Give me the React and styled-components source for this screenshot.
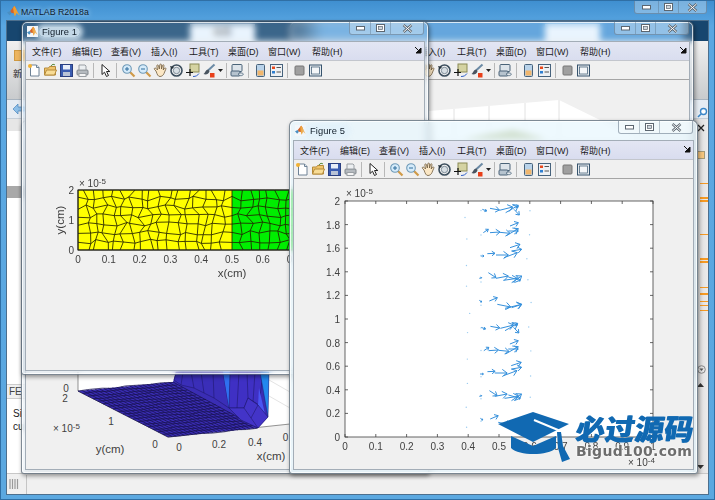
import React from 'react'
import styled, { createGlobalStyle } from 'styled-components'

const GlobalStyle = createGlobalStyle`
  html, body {
    margin: 0;
    padding: 0;
    background: #fff;
  }
  body {
    font-family: "Liberation Sans", "Noto Sans CJK SC", sans-serif;
  }
`

const Desktop = styled.div`
  position: relative;
  width: 715px;
  height: 500px;
  overflow: hidden;
  display: flex;
  flex-direction: column;
  background: linear-gradient(180deg, #3f8fd0 0%, #5aa7e2 5%, #5ba8e0 100%);
  border: 1px solid #2f6fa5;
  box-sizing: border-box;
`

const MainTitle = styled.div`
  height: 19px;
  flex: none;
  display: flex;
  align-items: center;
  gap: 1px;
  padding: 2px 0 0 6px;
  box-sizing: border-box;
  font-size: 8.8px;
  color: #10202e;
  text-shadow: 0 0 5px #cfe8fa;
`

const MainClient = styled.div`
  flex: 1;
  margin: 0 5px 4px 5px;
  display: flex;
  flex-direction: column;
  background: #f0f0f0;
  border: 1px solid #4d6f8d;
  min-height: 0;
`

const TabStrip = styled.div`
  height: 20px;
  flex: none;
  display: flex;
  align-items: stretch;
  background: linear-gradient(90deg, #17466f 0, #17466f 42%, #4b97d6 45%, #4b97d6 96%, #17466f 97%);
  padding-left: 183px;
`

const Tab = styled.div`
  width: ${p => p.$w}px;
  margin-top: 3px;
  background: ${p => p.$on ? '#f1f8ff' : 'transparent'};
  color: #555;
  font-size: 9px;
  text-align: center;
  line-height: 17px;
`

const ToolStrip = styled.div`
  height: 59px;
  flex: none;
  box-sizing: border-box;
  background: linear-gradient(180deg, #f0f0f0, #c9cbcd);
  border-bottom: 1px solid #a9b4bf;
  padding: 9px 0 0 6px;
  font-size: 9px;
  color: #222;
`

const StripIcon = styled.div`
  width: 10px;
  height: 9px;
  margin: 0 0 6px 1px;
  background: #edb55e;
  border: 1px solid #d09a42;
`

const AddressBar = styled.div`
  height: 19px;
  flex: none;
  box-sizing: border-box;
  background: #e6ecf3;
  border-bottom: 1px solid #c5ced8;
  padding-left: 6px;
  display: flex;
  align-items: center;
`

const Work = styled.div`
  flex: 1;
  display: flex;
  min-height: 0;
`

const LeftPane = styled.div`
  width: 18px;
  flex: none;
  background: #fff;
  display: flex;
  flex-direction: column;
  box-sizing: border-box;
  font-size: 10px;
  color: #222;
`

const PaneStripe = styled.div`
  height: ${p => p.$h}px;
  flex: none;
  background: ${p => p.$c || '#fff'};
`

const PaneLine = styled.div`
  padding-left: 6px;
  line-height: 13px;
  overflow: hidden;
  white-space: nowrap;
`

const PaneHead = styled(PaneLine)`
  background: #f0f0f0;
  border-top: 1px solid #ccc;
  border-bottom: 1px solid #ccc;
  margin-bottom: 8px;
  padding-left: 2px;
  color: #444;
`

const WorkFill = styled.div`
  flex: 1;
  background: #efefef;
`

const RightStrip = styled.div`
  width: 14px;
  flex: none;
  position: relative;
  background: linear-gradient(90deg, #d4d4d4, #ececec);
  border-left: 1px solid #9a9a9a;
`

const Mark = styled.div`
  position: absolute;
  right: 0;
  top: ${p => p.$y}px;
  width: ${p => p.$w || 8}px;
  height: ${p => p.$h || 1}px;
  background: #f59a23;
`

const StripGlyph = styled.div`
  position: absolute;
  left: 3px;
  top: ${p => p.$y}px;
  display: flex;
`

const StatusBar = styled.div`
  height: 20px;
  flex: none;
  background: #f0f0f0;
  border-top: 1px solid #c8c8c8;
  display: flex;
  align-items: center;
`

const Grip = styled.div`
  width: 20px;
  height: 19px;
  flex: none;
  box-sizing: border-box;
  padding: 4px 0 0 2px;
  border-right: 1px solid #c5c5c5;
  display: flex;
`

const Frame = styled.div`
  position: absolute;
  left: ${p => p.$x}px;
  top: ${p => p.$y}px;
  width: ${p => p.$w}px;
  height: ${p => p.$h}px;
  box-sizing: border-box;
  display: flex;
  flex-direction: column;
  padding: 0 3px 3px 3px;
  border: 1px solid rgba(50, 65, 80, 0.6);
  border-radius: 6px 6px 3px 3px;
  background: ${p => p.$active ? 'rgba(232, 246, 254, 0.72)' : 'rgba(205, 232, 250, 0.2)'};
  backdrop-filter: blur(3px);
  box-shadow: 1px 2px 4px rgba(0, 0, 0, 0.4), inset 0 0 0 1px rgba(255, 255, 255, 0.75);
`

const TitleRow = styled.div`
  height: 19px;
  flex: none;
  display: flex;
  align-items: center;
  gap: 4px;
  padding-left: 2px;
  font-size: 9.3px;
  letter-spacing: 0.1px;
  color: #101c28;
`

const TitleIcon = styled.span`
  width: 11px;
  height: 11px;
  display: flex;
  background: #f4f7fa;
`

const TitleText = styled.span`
  padding: 0 3px;
  margin-left: -3px;
  border-radius: 5px;
  background: rgba(225, 240, 250, 0.82);
  box-shadow: 0 0 5px 3px rgba(225, 240, 250, 0.82);
`

const Caption = styled.div`
  position: absolute;
  top: 0;
  right: ${p => p.$right || 4}px;
  height: 12px;
  display: flex;
  border: 1px solid rgba(80, 100, 120, 0.5);
  border-top: none;
  border-radius: 0 0 3px 3px;
  background: rgba(255, 255, 255, 0.3);
`

const CapBtn = styled.div`
  width: ${p => p.$w}px;
  display: flex;
  align-items: center;
  justify-content: center;
  border-left: ${p => p.$first ? 'none' : '1px solid rgba(80, 100, 120, 0.35)'};
`

const Client = styled.div`
  flex: 1;
  display: flex;
  flex-direction: column;
  min-height: 0;
  background: #f0f0f0;
  border: 1px solid #a3adb7;
`

const MenuBar = styled.div`
  height: 18px;
  flex: none;
  position: relative;
  display: flex;
  align-items: center;
  padding-left: 6px;
  background: linear-gradient(180deg, #e3e6f3, #d9ddef);
  border-bottom: 1px solid #c3c6cd;
  font-size: 9px;
  color: #1a1a1a;
`

const MenuItem = styled.span`
  width: ${p => p.$w}px;
  flex: none;
  white-space: nowrap;
`

const DockArrow = styled.span`
  position: absolute;
  right: 2px;
  top: 5px;
  display: flex;
`

const ToolBar = styled.div`
  height: 18px;
  flex: none;
  display: flex;
  align-items: center;
  background: #f0f0f0;
  border-bottom: 1px solid #a5a5a5;
`

const Slot = styled.div`
  width: ${p => p.$w || 16}px;
  height: 16px;
  flex: none;
  display: flex;
  align-items: center;
  justify-content: center;
`

const Sep = styled.div`
  width: 1px;
  height: 15px;
  flex: none;
  margin: 0 ${p => p.$m || 3}px;
  background: #b8b8b8;
`

const Plot = styled.div`
  flex: 1;
  position: relative;
  min-height: 0;
  overflow: hidden;
`

const Logo = styled.div`
  position: absolute;
  left: 496px;
  top: 409px;
  width: 205px;
  height: 58px;
  display: flex;
`

const LogoWords = styled.div`
  margin-left: 3px;
  display: flex;
  flex-direction: column;
`

const LogoCn = styled.div`
  font-family: "Noto Sans CJK SC", sans-serif;
  font-weight: 900;
  font-size: 29px;
  line-height: 34px;
  letter-spacing: 0.5px;
  color: #1169b2;
  transform: skewX(-8deg);
  text-shadow: 1px 0 0 #1169b2;
  white-space: nowrap;
`

const LogoEn = styled.div`
  font-family: "DejaVu Sans", sans-serif;
  font-weight: 700;
  font-size: 14px;
  line-height: 15px;
  letter-spacing: 0.3px;
  color: #6d6d6d;
  white-space: nowrap;
  text-shadow: 0 0 2px #fff, 0 0 2px #fff;
`

const MatlabLogo = ({ size = 11 }) => (
  <svg width={size} height={size} viewBox="0 0 14 14">
    <path d="M0 8l3.500-1.500L5 8.500 2.800 11z" fill="#4a8fc2" />
    <path d="M3.500 6.500 7.800 1c1 0 2.200 3.500 3.200 6L8 9 5 8.500z" fill="#d4622a" />
    <path d="M7.800 1c1.200 0 3 6 5.800 10-1.500-.7-2.500-1.800-3.200-2.400L8.500 12.500C7.500 10 7 7 6.600 3z" fill="#f0a030" />
  </svg>
)

const capStroke = '#5c6670'

const MinIcon = () => (
  <svg width="9" height="5" viewBox="0 0 9 5"><rect x=".5" y=".5" width="8" height="3.500" fill="#fff" stroke={capStroke} /></svg>
)
const MaxIcon = () => (
  <svg width="9" height="8" viewBox="0 0 9 8"><rect x=".5" y=".5" width="8" height="7" fill="#fff" stroke={capStroke} /><rect x="2.500" y="2.500" width="4" height="3" fill="#cfd6dc" stroke={capStroke} strokeWidth=".7" /></svg>
)
const CloseIcon = () => (
  <svg width="11" height="9" viewBox="0 0 11 9"><path d="M1.500 1l8 7M9.500 1l-8 7" stroke={capStroke} strokeWidth="2.400" /><path d="M1.500 1l8 7M9.500 1l-8 7" stroke="#fff" strokeWidth="1" /></svg>
)

const Ic = ({ children }) => (
  <Slot>
    <svg width="15" height="15" viewBox="0 0 15 15">{children}</svg>
  </Slot>
)

const Lens = ({ sign }) => (
  <>
    <path d="M9 9l4.500 4.500" stroke="#d09a48" strokeWidth="2.200" />
    <circle cx="6" cy="6" r="4.300" fill="#d5ebfa" stroke="#6f9ab8" strokeWidth="1.100" />
    <path d={sign === '+' ? 'M4 6h4M6 4v4' : 'M4 6h4'} stroke="#2f6c9c" strokeWidth="1" />
  </>
)

const FigToolbar = () => (
  <ToolBar>
    <Ic>
      <path d="M3.500 2h6l2.500 2.500V13h-8.500z" fill="#fff" stroke="#6e8296" />
      <path d="M9.500 2v2.500H12" fill="#dfe6ee" stroke="#6e8296" />
      <circle cx="3" cy="3" r="2" fill="#f2b233" />
    </Ic>
    <Ic>
      <path d="M1.500 5h4l1-1.500h6V12h-11z" fill="#f0c46a" stroke="#b58a3a" />
      <path d="M1.500 12l2-5h10l-2 5z" fill="#f8dc95" stroke="#b58a3a" />
      <path d="M8 3c1-2 3-2 4-1" fill="none" stroke="#5a8a3a" />
    </Ic>
    <Ic>
      <rect x="1.500" y="1.500" width="12" height="12" fill="#3a5cb0" stroke="#2a3f80" />
      <rect x="4" y="2" width="7" height="4.500" fill="#e8eef8" />
      <rect x="4" y="9" width="7" height="4" fill="#b9c3d6" />
    </Ic>
    <Ic>
      <rect x="2" y="7" width="11" height="5" rx="1" fill="#b5babf" stroke="#80868b" />
      <path d="M4 7V2h6l1 1v4z" fill="#eceff1" stroke="#9a9fa4" />
      <rect x="4" y="10.500" width="7" height="3" fill="#f4f4f4" stroke="#9a9fa4" />
    </Ic>
    <Sep $m={3} />
    <Ic>
      <path d="M4 1.500v10l2.500-2.300L8.500 13.500l2-1-2-4h3.300z" fill="#fff" stroke="#222" />
    </Ic>
    <Sep $m={3} />
    <Ic><Lens sign="+" /></Ic>
    <Ic><Lens sign="-" /></Ic>
    <Ic>
      <path d="M3 8L1.500 6.500c-.8-1 .5-2 1.400-1.200L4.500 7 3.800 2.800c0-1.200 1.500-1.200 1.700 0L6.300 6 6.800 1.800c.2-1 1.600-1 1.600 0L8.500 6l1-3.600c.3-1 1.700-.7 1.500.4L10.200 7l1.300-1.800c.7-.8 1.800 0 1.300 1L11 10.500c-.8 2-2.500 3-4 3-2 0-2.800-2-4-5.500z" fill="#fbe7c5" stroke="#6e5a3c" strokeWidth=".8" />
    </Ic>
    <Ic>
      <circle cx="7.500" cy="7.500" r="5.500" fill="none" stroke="#3d4f5e" strokeWidth="1.600" />
      <circle cx="7.500" cy="7.500" r="3.200" fill="#d8dfe4" stroke="#6a7a86" strokeWidth=".8" />
      <path d="M1 3l1.500 3.500L5 4z" fill="#25313a" />
    </Ic>
    <Ic>
      <rect x="5" y="1" width="9" height="8" fill="#d5d3a2" stroke="#8a8a55" />
      <path d="M1 9.500h7M5 6v7" stroke="#111" strokeWidth="1.200" />
      <path d="M8 13.500c3 0 4.500-1 6-3" fill="none" stroke="#3060c8" />
    </Ic>
    <Ic>
      <path d="M13.500 1.500L7 7.500" stroke="#6b8aa5" strokeWidth="2" />
      <path d="M7.500 6.500c-3 0-3 3-5 4.500 2 1 5 .5 6-2.500z" fill="#4a5560" />
      <rect x="9" y="10" width="4.500" height="4.500" fill="#e8401a" />
    </Ic>
    <Slot $w={8}>
      <svg width="5" height="3" viewBox="0 0 5 3"><path d="M0 0h5L2.500 3z" fill="#222" /></svg>
    </Slot>
    <Sep $m={2} />
    <Ic>
      <rect x="2" y="1.500" width="10" height="7" rx="1" fill="#dde4ea" stroke="#4a6378" />
      <rect x="1" y="8" width="9" height="5" rx="1" fill="#b6c3ce" stroke="#4a6378" />
      <path d="M8 11c2-1.500 4-1.500 5.500 0-1 2-3.500 2.500-5.500 0z" fill="#e5eaee" stroke="#4a6378" strokeWidth=".8" />
    </Ic>
    <Sep $m={3} />
    <Ic>
      <rect x="3.500" y="1.500" width="8" height="12" rx="1" fill="#b9d3ea" stroke="#46627c" />
      <rect x="4.500" y="7.500" width="6" height="5" fill="#f1b66c" />
    </Ic>
    <Ic>
      <rect x="1.500" y="1.500" width="12" height="12" fill="#eef1f4" stroke="#46627c" />
      <rect x="3" y="3.500" width="3" height="2.500" fill="#e8491d" />
      <rect x="3" y="8" width="3" height="2.500" fill="#2f7fd0" />
      <path d="M7.500 4.500h4.500M7.500 9h4.500" stroke="#555" />
    </Ic>
    <Sep $m={3} />
    <Ic>
      <rect x="3" y="3" width="9" height="9" rx="1" fill="#a0a0a0" stroke="#777" />
    </Ic>
    <Ic>
      <rect x="1.500" y="2" width="12" height="11" fill="#e6ebef" stroke="#36536d" />
      <rect x="3.500" y="4" width="8" height="7" fill="#f4f6f8" stroke="#36536d" strokeWidth=".7" />
    </Ic>
  </ToolBar>
)

const menus = [
  ['文件(F)', 40], ['编辑(E)', 39], ['查看(V)', 40], ['插入(I)', 38],
  ['工具(T)', 39], ['桌面(D)', 40], ['窗口(W)', 44], ['帮助(H)', 40],
]

const FigWindow = ({ title, x, y, w, h, active, children }) => (
  <Frame $x={x} $y={y} $w={w} $h={h} $active={active}>
    <TitleRow>
      {title && <TitleIcon><MatlabLogo /></TitleIcon>}
      {title && <TitleText>{title}</TitleText>}
    </TitleRow>
    <Caption>
      <CapBtn $w={20} $first><MinIcon /></CapBtn>
      <CapBtn $w={19}><MaxIcon /></CapBtn>
      <CapBtn $w={32}><CloseIcon /></CapBtn>
    </Caption>
    <Client>
      <MenuBar>
        {menus.map(([label, width]) => (
          <MenuItem key={label} $w={width}>{label}</MenuItem>
        ))}
        <DockArrow>
          <svg width="7" height="7" viewBox="0 0 7 7"><path d="M0 0l5 5M6 1v5H1z" stroke="#111" fill="#111" /></svg>
        </DockArrow>
      </MenuBar>
      <FigToolbar />
      <Plot>{children}</Plot>
    </Client>
  </Frame>
)

const rng = seed => {
  let s = seed
  return () => {
    s = (s * 16807) % 2147483647
    return (s - 1) / 2147483646
  }
}

const axisColor = '#404040'
const labelFont = { fontFamily: '"Liberation Sans", sans-serif', fill: '#404040' }

// quad mesh with jittered nodes, coordinates in the plot's own pixels
const Mesh = ({ x0, y0, w, h, nx, ny, split }) => {
  const r = rng(77)
  const pts = []
  for (let j = 0; j <= ny; j++) {
    const row = []
    for (let i = 0; i <= nx; i++) {
      const edgeX = i === 0 || i === nx || Math.abs(x0 + (i * w) / nx - split) < 0.1
      const edgeY = j === 0 || j === ny
      row.push([
        x0 + (i * w) / nx + (edgeX ? 0 : (r() - 0.5) * 7.5),
        y0 + (j * h) / ny + (edgeY ? 0 : (r() - 0.5) * 4.6),
      ])
    }
    pts.push(row)
  }
  let d = ''
  pts.forEach(row => {
    d += 'M' + row.map(p => p[0].toFixed(1) + ' ' + p[1].toFixed(1)).join('L')
  })
  for (let i = 0; i <= nx; i++) {
    d += 'M' + pts.map(row => row[i][0].toFixed(1) + ' ' + row[i][1].toFixed(1)).join('L')
  }
  return <path d={d} fill="none" stroke="#222200" strokeWidth=".85" />
}

const Exponent = ({ x, y, power }) => (
  <text x={x} y={y} fontSize="10" style={labelFont}>× 10<tspan dy="-3" fontSize="8">{power}</tspan></text>
)

// origin of the plot area inside Figure 1: x 25, y 79 on the page
const Figure1Plot = () => {
  const ox = 25
  const oy = 79
  const X = v => 77 - ox + v * 308
  const top = 189 - oy
  const bottom = 249 - oy
  return (
    <svg width="398" height="290" viewBox="0 0 398 290">
      <rect x={X(0)} y={top} width={154} height={60} fill="#ffff00" />
      <rect x={X(0.5)} y={top} width={154} height={60} fill="#00ee00" />
      <Mesh x0={X(0)} y0={top} w={308} h={60} nx={34} ny={7} split={X(0.5)} />
      <rect x={X(0)} y={top} width={308} height={60} fill="none" stroke="#222" />
      {[0, 0.1, 0.2, 0.3, 0.4, 0.5, 0.6, 0.7, 0.8, 0.9, 1].map(v => (
        <text key={v} x={X(v)} y={bottom + 13} fontSize="10" textAnchor="middle" style={labelFont}>{v}</text>
      ))}
      {[[0, bottom], [1, top + 30], [2, top]].map(([v, y]) => (
        <text key={v} x={X(0) - 4} y={y + 4} fontSize="10" textAnchor="end" style={labelFont}>{v}</text>
      ))}
      <Exponent x={X(0) + 1} y={top - 3} power="-5" />
      <text x={X(0.5)} y={bottom + 27} fontSize="11.500" textAnchor="middle" style={labelFont}>x(cm)</text>
      <text transform={`translate(${X(0) - 14},${top + 30}) rotate(-90)`} fontSize="11.500" textAnchor="middle" style={labelFont}>y(cm)</text>
    </svg>
  )
}

// one set of quiver arrows per row, as page pixels relative to the first row's corner
const arrowSets = [
  [[127, 55, 140, 60], [150, 52, 178, 57], [178, 58, 218, 48], [197, 65, 235, 43], [218, 42, 235, 48], [222, 55, 238, 72]],
  [[130, 125, 145, 115], [150, 125, 180, 123], [180, 124, 210, 127], [197, 135, 235, 113], [210, 105, 235, 95], [205, 120, 235, 120]],
  [[122, 195, 132, 195], [142, 188, 165, 187], [168, 192, 205, 192], [192, 200, 232, 185], [210, 170, 240, 160], [215, 180, 245, 175]],
  [[145, 245, 168, 260], [168, 262, 205, 255], [190, 268, 232, 262], [215, 275, 245, 255], [205, 258, 240, 268], [118, 262, 125, 260]],
  [[148, 330, 172, 320], [172, 340, 212, 348], [195, 352, 245, 340], [215, 350, 245, 340], [118, 328, 125, 333]],
]

const Arrow = ({ x1, y1, x2, y2 }) => {
  const dx = x2 - x1
  const dy = y2 - y1
  const len = Math.hypot(dx, dy) || 1
  const ux = dx / len
  const uy = dy / len
  const size = Math.min(6, len * 0.5)
  const a = [x2 - size * (ux * 0.8 - uy * 0.6), y2 - size * (uy * 0.8 + ux * 0.6)]
  const b = [x2 - size * (ux * 0.8 + uy * 0.6), y2 - size * (uy * 0.8 - ux * 0.6)]
  return (
    <path
      d={`M${x1} ${y1}L${x2} ${y2}M${a[0].toFixed(1)} ${a[1].toFixed(1)}L${x2} ${y2}L${b[0].toFixed(1)} ${b[1].toFixed(1)}`}
      fill="none"
      stroke="#3590dc"
      strokeWidth="1"
    />
  )
}

// origin of the plot area inside Figure 5: x 294, y 178 on the page
const Figure5Plot = () => {
  const ox = 294
  const oy = 178
  const X = v => 345 - ox + v * 308
  const Y = v => 436 - oy - v * 118
  const r = rng(431)
  const arrows = []
  const dots = []
  for (let n = 0; n < 10; n++) {
    const set = arrowSets[n % 5]
    const shift = n < 5 ? 0 : 118
    set.forEach(([a, b, c, d]) => {
      const jx = n < 5 ? 0 : r() * 3 - 1.5
      arrows.push({
        x1: 440 + a / 3 - ox + jx,
        y1: 190 + b / 3 + shift - oy,
        x2: 440 + c / 3 - ox + jx,
        y2: 190 + d / 3 + shift - oy,
      })
    })
    const y = 207 + n * 23.600 - oy
    dots.push([465 - ox + r() * 5, y + 6 + r() * 5], [526 - ox + r() * 6, y + r() * 4], [481 - ox, y + r() * 4])
  }
  return (
    <svg width="398" height="291" viewBox="0 0 398 291">
      <rect x={X(0)} y={Y(2)} width={308} height={236} fill="#fff" stroke="#404040" strokeWidth=".8" />
      {[0, 0.1, 0.2, 0.3, 0.4, 0.5, 0.6, 0.7, 0.8, 0.9, 1].map(v => (
        <g key={v}>
          <path d={`M${X(v)} ${Y(0)}v-3M${X(v)} ${Y(2)}v3`} stroke="#404040" strokeWidth=".8" />
          <text x={X(v)} y={Y(0) + 13} fontSize="10" textAnchor="middle" style={labelFont}>{v}</text>
        </g>
      ))}
      {[0, 0.2, 0.4, 0.6, 0.8, 1, 1.2, 1.4, 1.6, 1.8, 2].map(v => (
        <g key={v}>
          <path d={`M${X(0)} ${Y(v)}h3M${X(1)} ${Y(v)}h-3`} stroke={axisColor} strokeWidth=".8" />
          <text x={X(0) - 5} y={Y(v) + 4} fontSize="10" textAnchor="end" style={labelFont}>{v}</text>
        </g>
      ))}
      <Exponent x={X(0) + 1} y={Y(2) - 4} power="-5" />
      <Exponent x={X(1) - 25} y={Y(0) + 29} power="-4" />
      {arrows.map((a, i) => <Arrow key={i} {...a} />)}
      {dots.map((d, i) => <circle key={i} cx={d[0]} cy={d[1]} r=".7" fill="#9cccf0" />)}
    </svg>
  )
}

// plot area of the top right window: x 293, y 80 on the page
const SurfaceTopPlot = () => {
  const P = (x, y) => `${x - 293},${y - 80}`
  return (
    <svg width="398" height="290" viewBox="0 0 398 290">
      <polygon points={`${P(428, 111)} ${P(558, 100)} ${P(640, 140)} ${P(428, 140)}`} fill="#fff" />
      <path d={`M${P(453, 109)}L${P(453, 140)}M${P(488, 106)}L${P(488, 140)}M${P(524, 103)}L${P(524, 140)}M${P(558, 100)}L${P(558, 140)}`} stroke="#e2e2e2" fill="none" />
      <polygon points={`${P(462, 139)} ${P(512, 130)} ${P(545, 139)}`} fill="#98a65a" />
    </svg>
  )
}

// plot area of the bottom left window: x 25, y 179 on the page
const SurfaceBottomPlot = () => {
  const ox = 25
  const oy = 179
  const p = (x, y) => [x - ox, y - oy]
  const P = (x, y) => p(x, y).join(',')
  const poly = pts => pts.map(([x, y]) => P(x, y)).join(' ')
  const r = rng(9)
  const A = [77, 391]
  const B = [172, 382]
  const D = [167, 437]
  const E = [257, 428]
  const lerp = (a, b, t) => [a[0] + (b[0] - a[0]) * t, a[1] + (b[1] - a[1]) * t]
  let floor = ''
  for (let i = 0; i <= 18; i++) {
    const a = lerp(A, D, i / 18)
    const b = lerp(B, E, i / 18)
    floor += `M${P(a[0], a[1])}`
    for (let k = 1; k <= 8; k++) {
      const q = lerp(a, b, k / 8)
      floor += `L${P(q[0] + (r() - 0.5) * 1.500, q[1] + (r() - 0.5) * 1.500)}`
    }
  }
  for (let i = 0; i <= 22; i++) {
    const a = lerp(A, B, i / 22)
    const b = lerp(D, E, i / 22)
    floor += `M${P(a[0], a[1])}L${P(b[0], b[1])}`
  }
  const edge = '#1a1560'
  return (
    <svg width="398" height="290" viewBox="0 0 398 290">
      <polygon points={poly([[77, 372], [289, 372], [289, 424], [167, 437], [77, 391]])} fill="#fff" />
      <path d={`M${P(77, 372)}L${P(77, 391)}L${P(167, 437)}L${P(289, 424)}`} fill="none" stroke="#666" strokeWidth=".7" />
      <path d={`M${P(268, 380)}L${P(289, 392)}M${P(268, 396)}L${P(289, 408)}`} fill="none" stroke="#e4e4e4" />
      <polygon points={poly([A, B, [175, 372], [268, 372], [267, 417], E, D])} fill="#3a2db4" />
      <path d={floor} fill="none" stroke="#17124f" strokeWidth=".75" />
      <polygon points={poly([[175, 372], [222, 372], [228, 408], [213, 398], [193, 388], [180, 385], [173, 380]])} fill="#3a2eb8" stroke={edge} strokeWidth=".5" />
      <path d={`M${P(182, 372)}L${P(180, 385)}M${P(190, 372)}L${P(193, 388)}M${P(200, 372)}L${P(203, 393)}M${P(212, 372)}L${P(213, 398)}`} stroke={edge} strokeWidth=".5" fill="none" />
      <polygon points={poly([[222, 372], [230, 372], [231, 396], [228, 408]])} fill="#2f70f0" />
      <polygon points={poly([[229, 372], [262, 372], [258, 405], [247, 398], [243, 408], [228, 408]])} fill="#3f30c4" stroke={edge} strokeWidth=".5" />
      <path d={`M${P(238, 372)}L${P(236, 408)}M${P(246, 372)}L${P(247, 398)}M${P(254, 372)}L${P(252, 402)}`} stroke={edge} strokeWidth=".5" fill="none" />
      <polygon points={poly([[259, 372], [268, 372], [267, 417]])} fill="#2288ee" stroke={edge} strokeWidth=".4" />
      <polygon points={poly([[258, 388], [264, 414], [257, 405]])} fill="#4a55f2" />
      <polygon points={poly([[228, 408], [243, 408], [247, 398], [257, 405], [267, 417], [257, 428], [240, 420]])} fill="#4334c8" stroke={edge} strokeWidth=".5" />
      <path d={`M${P(243, 408)}L${P(257, 428)}M${P(257, 405)}L${P(250, 418)}`} stroke={edge} strokeWidth=".5" fill="none" />
      {[['0', 65, 392], ['2', 64, 402], ['1', 110, 425], ['0', 154, 448], ['0', 178, 451], ['0.2', 218, 448], ['0.4', 254, 446], ['0.', 286, 441]].map(([t, x, y]) => (
        <text key={t + x} x={x - ox} y={y - oy} fontSize="10" textAnchor="middle" style={labelFont}>{t}</text>
      ))}
      <Exponent x={52 - ox} y={432 - oy} power="-5" />
      <text x={109 - ox} y={453 - oy} fontSize="11.500" textAnchor="middle" style={labelFont}>y(cm)</text>
      <text x={270 - ox} y={460 - oy} fontSize="11.500" textAnchor="middle" style={labelFont}>x(cm)</text>
    </svg>
  )
}

const App = () => (
  <>
    <GlobalStyle />
    <Desktop>
      <MainTitle>
        <MatlabLogo size={13} />
        <span>MATLAB R2018a</span>
      </MainTitle>
      <Caption $right={7}>
        <CapBtn $w={23} $first><MinIcon /></CapBtn>
        <CapBtn $w={19}><MaxIcon /></CapBtn>
        <CapBtn $w={27}><CloseIcon /></CapBtn>
      </Caption>
      <MainClient>
        <TabStrip>
          <Tab $w={65} $on>绘图</Tab>
          <Tab $w={290} />
          <Tab $w={55} $on />
        </TabStrip>
        <ToolStrip>
          <StripIcon />
          新
        </ToolStrip>
        <AddressBar>
          <svg width="12" height="10" viewBox="0 0 12 10"><path d="M0 5l5-5v3h7v4H5v3z" fill="#8ebfe8" stroke="#4a86bd" strokeWidth=".7" /></svg>
        </AddressBar>
        <Work>
          <LeftPane>
            <PaneStripe $h={12} $c="#e6e6e6" />
            <PaneStripe $h={55} />
            <PaneStripe $h={12} $c="#a8a8a8" />
            <PaneStripe $h={186} />
            <PaneHead>FE</PaneHead>
            <PaneLine>Si</PaneLine>
            <PaneLine>cu</PaneLine>
          </LeftPane>
          <WorkFill />
          <RightStrip>
            <StripGlyph $y={-12}>
              <svg width="11" height="11" viewBox="0 0 11 11"><circle cx="6.500" cy="4.500" r="3" fill="#fff" stroke="#3a86c8" strokeWidth="1.400" /><path d="M4 7L1 10" stroke="#3a86c8" strokeWidth="1.600" /></svg>
            </StripGlyph>
            <StripGlyph $y={5}>
              <svg width="8" height="8" viewBox="0 0 8 8"><path d="M1 1l6 6M7 1L1 7" stroke="#222" strokeWidth="1.300" /></svg>
            </StripGlyph>
            <StripGlyph $y={32}>
              <svg width="8" height="8" viewBox="0 0 8 8"><rect x=".5" y=".5" width="7" height="7" fill="#f6c67e" stroke="#a59a78" /></svg>
            </StripGlyph>
            {[[64], [78, 2], [81, 2], [115], [139, 2], [142, 2], [168], [174, 2], [182], [186], [191]].map(([y, h]) => (
              <Mark key={y} $y={y} $h={h} />
            ))}
            <StripGlyph $y={246}>
              <svg width="9" height="9" viewBox="0 0 9 9"><circle cx="4.500" cy="4.500" r="3.800" fill="none" stroke="#888" /><path d="M2.500 3.500h4L4.500 6z" fill="#555" /></svg>
            </StripGlyph>
            <StripGlyph $y={264}>
              <svg width="7" height="4" viewBox="0 0 7 4"><path d="M0 4h7L3.500 0z" fill="#333" /></svg>
            </StripGlyph>
            <StripGlyph $y={346}>
              <svg width="7" height="4" viewBox="0 0 7 4"><path d="M0 0h7L3.500 4z" fill="#333" /></svg>
            </StripGlyph>
          </RightStrip>
        </Work>
        <StatusBar>
          <Grip>
            <svg width="12" height="10" viewBox="0 0 12 10"><path d="M1 0v10M3.500 0v10M6 0v10M8.500 0v10" stroke="#9a9a9a" strokeWidth="1.200" /></svg>
          </Grip>
        </StatusBar>
      </MainClient>

      <FigWindow x={288} y={20} w={405} h={354}>
        <SurfaceTopPlot />
      </FigWindow>
      <FigWindow x={20} y={119} w={408} h={354}>
        <SurfaceBottomPlot />
      </FigWindow>
      <FigWindow title="Figure 1" x={20} y={20} w={408} h={354}>
        <Figure1Plot />
      </FigWindow>
      <FigWindow title="Figure 5" active x={288} y={119} w={409} h={354}>
        <Figure5Plot />
      </FigWindow>

      <Logo>
        <svg width="76" height="56" viewBox="0 0 76 56">
          <path d="M36 2L1 14l35 18 36-18z" fill="#1169b2" />
          <path d="M14 26l22 10 23-10v12c-8 8-37 8-45 0z" fill="#1169b2" />
          <path d="M37 10l24 10v9" fill="none" stroke="#fff" strokeWidth="2" />
          <path d="M60 22h4l2 14 7 13-8 3-4-14z" fill="#1169b2" />
        </svg>
        <LogoWords>
          <LogoCn>必过源码</LogoCn>
          <LogoEn>Bigud100.com</LogoEn>
        </LogoWords>
      </Logo>
    </Desktop>
  </>
)

export default App
